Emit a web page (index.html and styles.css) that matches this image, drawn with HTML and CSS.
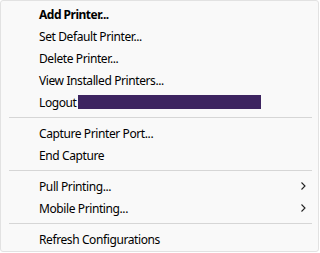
FILE: index.html
```html
<!DOCTYPE html>
<html>
<head>
<meta charset="utf-8">
<link rel="stylesheet" href="styles.css">
</head>
<body>
<div class="menu">
  <div class="item bold">Add Printer...</div>
  <div class="item">Set Default Printer...</div>
  <div class="item">Delete Printer...</div>
  <div class="item">View Installed Printers...</div>
  <div class="item">Logout<span class="redact"></span></div>
  <div class="sep"></div>
  <div class="item">Capture Printer Port...</div>
  <div class="item">End Capture</div>
  <div class="sep"></div>
  <div class="item sub">Pull Printing...<svg class="chev" width="5" height="8" viewBox="0 0 5 8"><path d="M0.5 0.5 L4 4 L0.5 7.5" fill="none" stroke="#222" stroke-width="1.1"/></svg></div>
  <div class="item sub">Mobile Printing...<svg class="chev" width="5" height="8" viewBox="0 0 5 8"><path d="M0.5 0.5 L4 4 L0.5 7.5" fill="none" stroke="#222" stroke-width="1.1"/></svg></div>
  <div class="sep"></div>
  <div class="item">Refresh Configurations</div>
</div>
</body>
</html>
```
FILE: styles.css
```css
html, body {
  margin: 0;
  padding: 0;
  background: #ffffff;
}
.menu {
  box-sizing: border-box;
  width: 319px;
  height: 252px;
  background: #f9f9f9;
  border: 1px solid #e2e2e2;
  border-radius: 3px;
  padding: 2px 0 1px 0;
  font-family: "Noto Sans", "Open Sans", sans-serif;
  font-size: 12px;
  letter-spacing: -0.4px;
  color: #000;
}
.item {
  height: 22px;
  display: flex;
  align-items: center;
  padding-left: 38px;
  padding-right: 12px;
  white-space: nowrap;
}
.bold {
  font-weight: bold;
  letter-spacing: -0.5px;
}
.sub {
  justify-content: space-between;
}
.redact {
  display: inline-block;
  width: 183px;
  height: 14px;
  background: #3d2460;
  margin-left: 1px;
}
.sep {
  height: 1px;
  background: #d6d6d6;
  margin: 4px 6px 4px 8px;
}
```
